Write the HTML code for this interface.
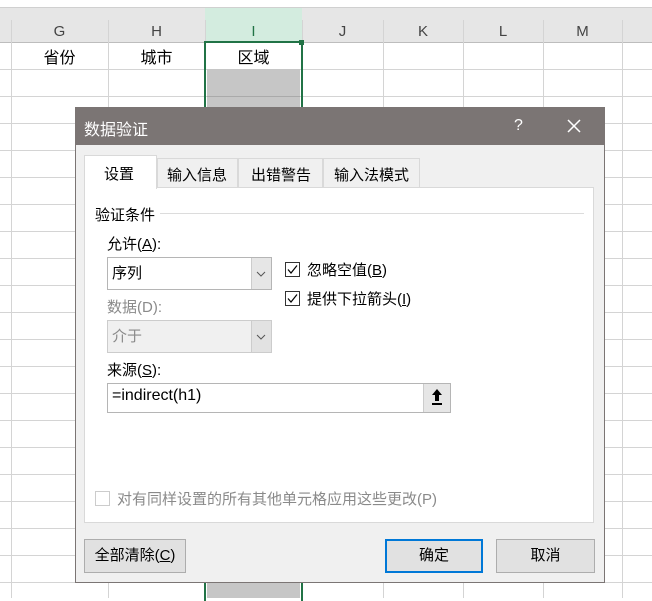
<!DOCTYPE html>
<html><head><meta charset="utf-8"><style>
*{box-sizing:border-box;margin:0;padding:0}
body{width:652px;height:598px;position:relative;overflow:hidden;background:#fff;font-family:"Liberation Sans","Microsoft YaHei","Noto Sans CJK SC",sans-serif;font-size:15px;color:#000}
.a{position:absolute}
.vl{position:absolute;width:1px;background:#d4d4d4}
.hl{position:absolute;height:1px;background:#d4d4d4;left:0;width:652px}
.ch{position:absolute;top:20px;height:22px;line-height:24px;text-align:center;font-size:15px;color:#444}
.t{position:absolute;font-size:15px;white-space:nowrap}
.cb{position:absolute;width:15px;height:15px;border:1px solid #333;background:#fff}
.btn{position:absolute;border:1px solid #adadad;background:#e1e1e1;text-align:center;line-height:31px;font-size:15px}
</style></head><body>
<div class="a" style="left:0;top:7px;width:652px;height:35px;background:#e6e6e6;border-top:1px solid #d0d0d0"></div>
<div class="a" style="left:205px;top:8px;width:97px;height:34px;background:#d3ecdf"></div>
<div class="hl" style="top:42px;background:#bdbdbd"></div>
<div class="hl" style="top:69px"></div><div class="hl" style="top:96px"></div><div class="hl" style="top:123px"></div><div class="hl" style="top:150px"></div><div class="hl" style="top:177px"></div><div class="hl" style="top:204px"></div><div class="hl" style="top:231px"></div><div class="hl" style="top:258px"></div><div class="hl" style="top:285px"></div><div class="hl" style="top:312px"></div><div class="hl" style="top:339px"></div><div class="hl" style="top:366px"></div><div class="hl" style="top:393px"></div><div class="hl" style="top:420px"></div><div class="hl" style="top:447px"></div><div class="hl" style="top:474px"></div><div class="hl" style="top:501px"></div><div class="hl" style="top:528px"></div><div class="hl" style="top:555px"></div><div class="hl" style="top:582px"></div>
<div class="vl" style="left:11px;top:20px;height:578px"></div><div class="vl" style="left:108px;top:20px;height:578px"></div><div class="vl" style="left:205px;top:20px;height:578px"></div><div class="vl" style="left:302px;top:20px;height:578px"></div><div class="vl" style="left:383px;top:20px;height:578px"></div><div class="vl" style="left:463px;top:20px;height:578px"></div><div class="vl" style="left:543px;top:20px;height:578px"></div><div class="vl" style="left:622px;top:20px;height:578px"></div>
<div class="ch" style="left:11px;width:97px">G</div><div class="ch" style="left:108px;width:97px">H</div><div class="ch" style="left:205px;width:97px;color:#217346">I</div><div class="ch" style="left:302px;width:81px">J</div><div class="ch" style="left:383px;width:80px">K</div><div class="ch" style="left:463px;width:80px">L</div><div class="ch" style="left:543px;width:79px">M</div>
<div class="t" style="left:11px;width:97px;top:44px;text-align:center;font-size:16px">省份</div>
<div class="t" style="left:108px;width:97px;top:44px;text-align:center;font-size:16px">城市</div>
<div class="t" style="left:205px;width:97px;top:44px;text-align:center;font-size:16px">区域</div>
<div class="a" style="left:207px;top:69px;width:93px;height:529px;background:#c6c6c6"></div>
<div class="hl" style="top:96px;left:207px;width:93px;background:#aaa"></div>
<div class="a" style="left:204px;top:41px;width:99px;height:560px;border:2px solid #217346;border-bottom:none"></div>
<div class="a" style="left:299px;top:40px;width:5px;height:5px;background:#217346"></div>
<!-- dialog -->
<div class="a" style="left:75px;top:107px;width:530px;height:476px;background:#f0f0f0;border:1px solid #7b7574">
<div class="a" style="left:-1px;top:-1px;width:530px;height:38px;background:#7b7574"></div>
<div class="t" style="left:8px;top:8px;color:#fff;font-size:16px">数据验证</div>
<div class="t" style="left:438px;top:9px;color:#fff;font-size:16px">?</div>
<svg class="a" style="left:491px;top:11px" width="14" height="14"><path d="M1 1 L13 13 M13 1 L1 13" stroke="#fff" stroke-width="1.5"/></svg>
</div>
<div class="a" style="left:84px;top:187px;width:510px;height:336px;background:#fff;border:1px solid #d9d9d9"></div>
<div class="a" style="left:157px;top:158px;width:81px;height:30px;border:1px solid #d9d9d9;background:#f0f0f0"></div>
<div class="a" style="left:238px;top:158px;width:85px;height:30px;border:1px solid #d9d9d9;background:#f0f0f0"></div>
<div class="a" style="left:323px;top:158px;width:97px;height:30px;border:1px solid #d9d9d9;background:#f0f0f0"></div>
<div class="a" style="left:84px;top:155px;width:73px;height:34px;border:1px solid #d9d9d9;border-bottom:none;background:#fff"></div>
<div class="t" style="left:104px;top:163px">设置</div>
<div class="t" style="left:167px;top:164px">输入信息</div>
<div class="t" style="left:251px;top:164px">出错警告</div>
<div class="t" style="left:334px;top:164px">输入法模式</div>
<div class="t" style="left:95px;top:204px">验证条件</div>
<div class="a" style="left:160px;top:213px;width:424px;height:1px;background:#dcdcdc"></div>
<div class="t" style="left:107px;top:233px">允许(<u>A</u>):</div>
<div class="a" style="left:107px;top:257px;width:165px;height:33px;border:1px solid #b5b5b5;background:#fff"></div>
<div class="a" style="left:251px;top:258px;width:20px;height:31px;background:#e6e6e6;border-left:1px solid #ccc"></div>
<div class="t" style="left:112px;top:262px">序列</div>
<svg class="a" style="left:256px;top:271px" width="10" height="6"><path d="M1 1 L5 5 L9 1" stroke="#555" fill="none"/></svg>
<div class="cb" style="left:285px;top:262px"></div><svg class="a" style="left:285px;top:262px" width="15" height="15"><path d="M3 7.5 L6 11 L12 3.5" stroke="#000" stroke-width="1.2" fill="none"/></svg>
<div class="t" style="left:307px;top:259px">忽略空值(<u>B</u>)</div>
<div class="cb" style="left:285px;top:291px"></div><svg class="a" style="left:285px;top:291px" width="15" height="15"><path d="M3 7.5 L6 11 L12 3.5" stroke="#000" stroke-width="1.2" fill="none"/></svg>
<div class="t" style="left:307px;top:288px">提供下拉箭头(<u>I</u>)</div>
<div class="t" style="left:107px;top:296px;color:#8a8a8a">数据(D):</div>
<div class="a" style="left:107px;top:320px;width:165px;height:33px;border:1px solid #ccc;background:#f0f0f0"></div>
<div class="a" style="left:251px;top:321px;width:20px;height:31px;background:#e2e2e2;border-left:1px solid #ccc"></div>
<div class="t" style="left:112px;top:325px;color:#8a8a8a">介于</div>
<svg class="a" style="left:256px;top:334px" width="10" height="6"><path d="M1 1 L5 5 L9 1" stroke="#555" fill="none"/></svg>
<div class="t" style="left:107px;top:359px">来源(<u>S</u>):</div>
<div class="a" style="left:107px;top:383px;width:344px;height:30px;border:1px solid #b5b5b5;background:#fff"></div>
<div class="a" style="left:423px;top:384px;width:27px;height:28px;background:#e6e6e6;border-left:1px solid #ccc"></div>
<svg class="a" style="left:430px;top:388px" width="14" height="20"><path d="M7 1 L12 7 H9 V13 H5 V7 H2 Z" fill="#000"/><rect x="2" y="15" width="10" height="2" fill="#000"/></svg>
<div class="t" style="left:112px;top:387px;font-size:16px">=indirect(h1)</div>
<div class="cb" style="left:95px;top:491px;border-color:#ccc"></div>
<div class="t" style="left:117px;top:488px;color:#8a8a8a">对有同样设置的所有其他单元格应用这些更改(P)</div>
<div class="btn" style="left:84px;top:539px;width:102px;height:34px">全部清除(<u>C</u>)</div>
<div class="btn" style="left:385px;top:539px;width:98px;height:34px;border:2px solid #0078d7;line-height:30px">确定</div>
<div class="btn" style="left:496px;top:539px;width:99px;height:34px">取消</div>
</body></html>
